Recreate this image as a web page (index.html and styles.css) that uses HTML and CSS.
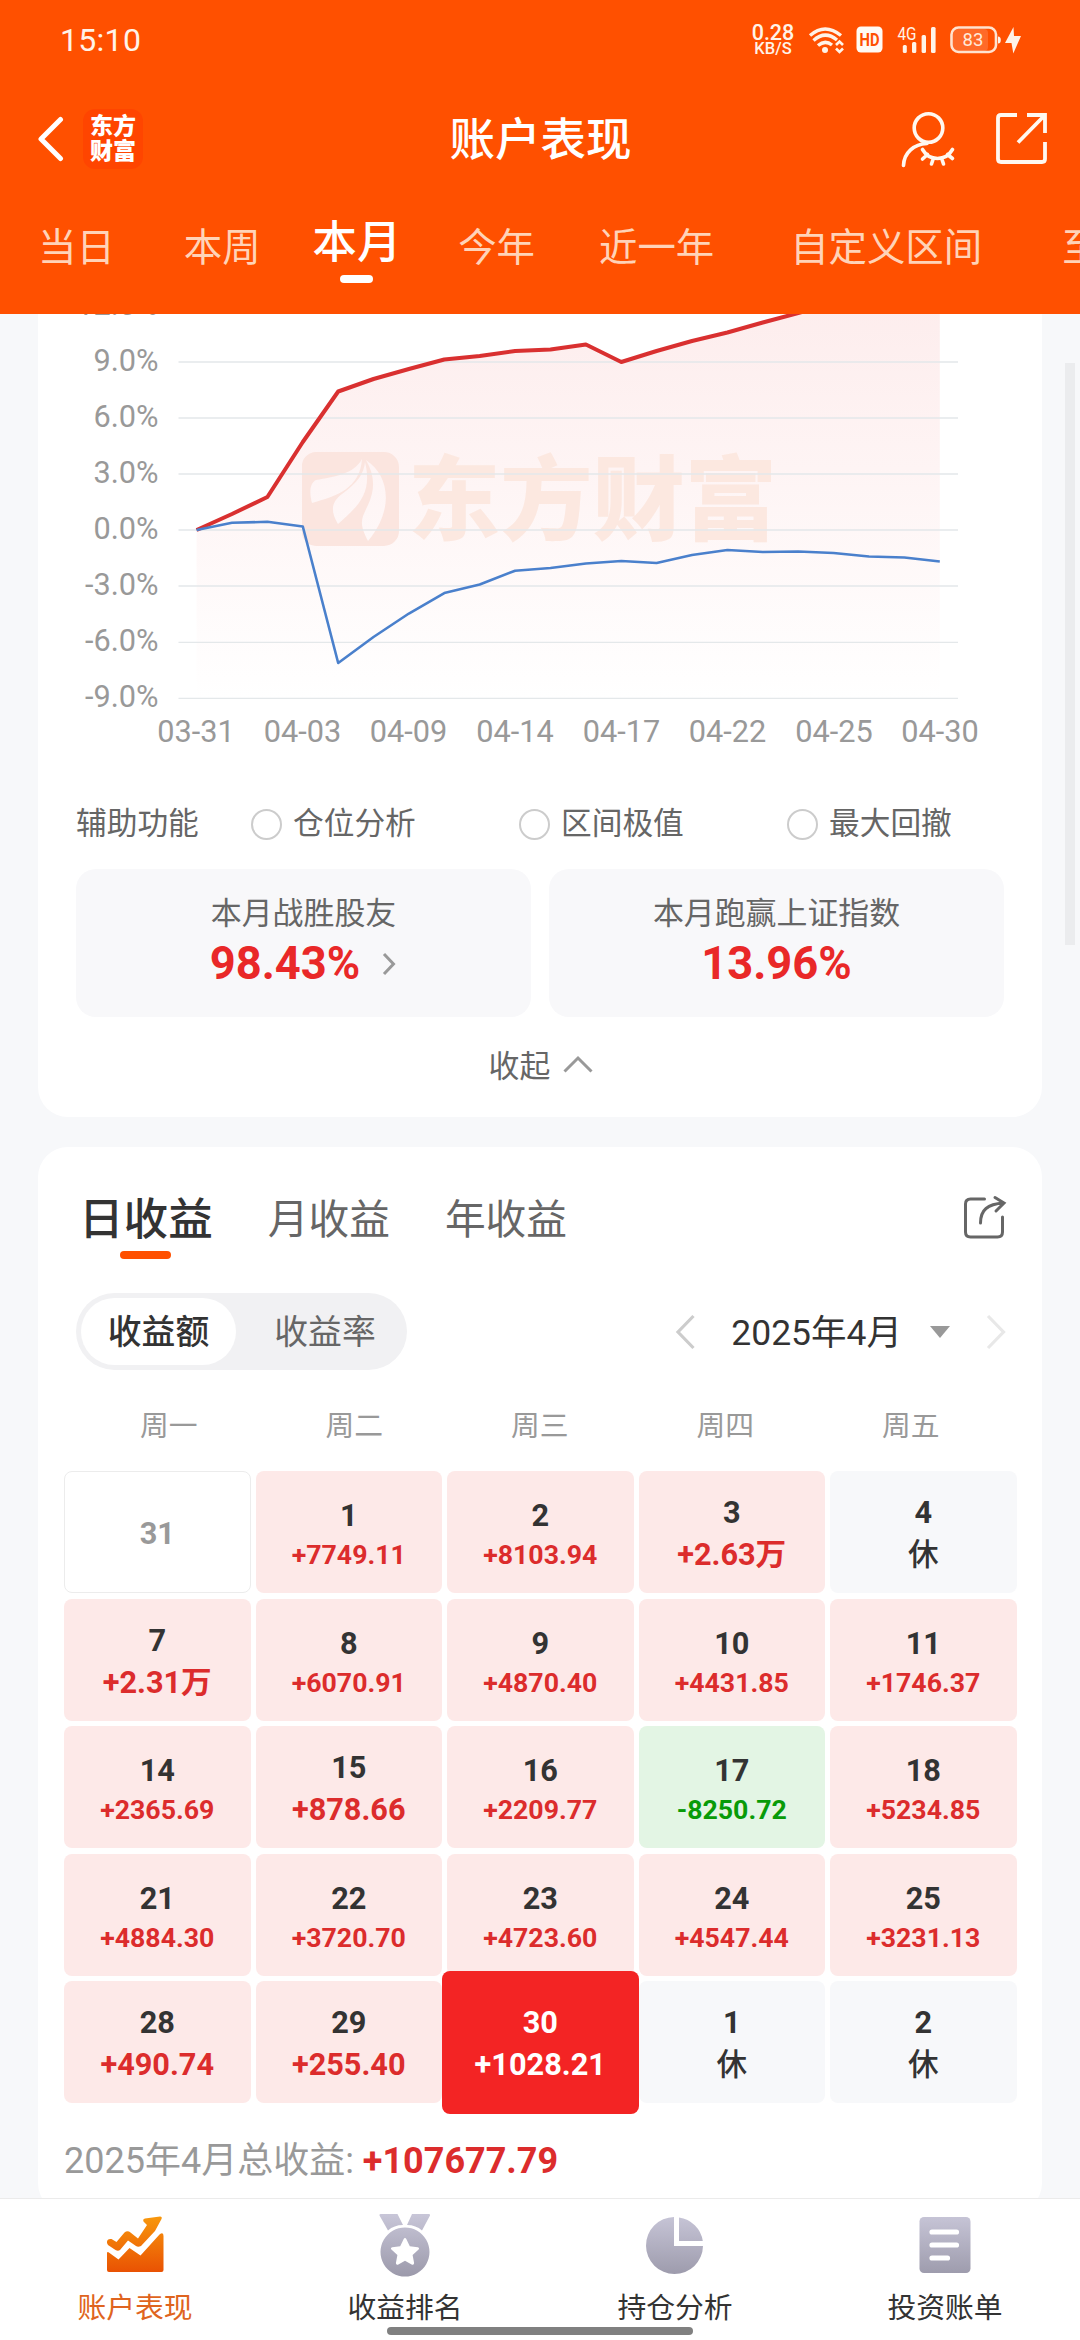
FILE: index.html
```html
<!DOCTYPE html>
<html lang="zh-CN">
<head>
<meta charset="utf-8">
<title>账户表现</title>
<link rel="stylesheet" href="styles.css">
</head>
<body>
<div class="app">
  <header class="header">
    <div class="status">
      <span class="clock">15:10</span>
      <div class="status-right">
        <div class="speed"><b>0.28</b><i>KB/S</i></div>
        <svg class="status-icons" width="216" height="34" viewBox="806 24 216 34">
          <g fill="none" stroke="#fff3e8" stroke-width="3.400">
            <path d="M810 36.500Q825 23.500 841 36.500"/>
            <path d="M813.500 41.500Q825 31 837 41"/>
            <path d="M818 46.500Q825 40.500 832 46"/>
          </g>
          <circle cx="825" cy="51" r="3" fill="#fff3e8"/>
          <path d="M836 46l3.500-3.500 3.500 3.500M836 49.500l3.500 3.500 3.500-3.500" fill="none" stroke="#fff3e8" stroke-width="2.600"/>
          <rect x="856.500" y="27.500" width="26" height="26" rx="4.500" fill="#fffaf4"/>
          <text x="859.500" y="47" class="hd" textLength="20" lengthAdjust="spacingAndGlyphs">HD</text>
          <text x="897.500" y="41" class="net" textLength="19" lengthAdjust="spacingAndGlyphs">4G</text>
          <g fill="#fff3e8">
            <rect x="902.800" y="46" width="4" height="8" rx="1.500"/>
            <rect x="912" y="43" width="4.300" height="11" rx="1.500"/>
            <rect x="921.600" y="36" width="4.400" height="18" rx="1.500"/>
            <rect x="931" y="28" width="4.600" height="26" rx="1.500"/>
            <path d="M1013.500 28l-8.500 16h6.500l1.800 10.500 7.700-17.500h-7z"/>
            <path d="M998 37.500q2.800 0 2.800 3.500t-2.800 3.500z"/>
          </g>
          <rect x="953" y="30" width="35" height="22" rx="4" fill="#ff6a28"/>
          <rect x="951.500" y="28.500" width="44.500" height="24.500" rx="7" fill="none" stroke="#ffe3d0" stroke-width="2.600"/>
          <text x="973" y="46.500" class="bat">83</text>
        </svg>
      </div>
    </div>
    <div class="titlebar">
      <div class="title-left">
        <svg width="28" height="48" viewBox="36 115 28 48"><path d="M60.500 119.500L41 139l19.500 19.500" fill="none" stroke="#fff" stroke-width="5" stroke-linecap="round" stroke-linejoin="round"/></svg>
        <div class="logo"><span>东方</span><span>财富</span></div>
      </div>
      <h1>账户表现</h1>
      <div class="title-right">
        <svg width="60" height="60" viewBox="898 108 60 60" fill="none" stroke="#fff8f0" stroke-width="3.600" stroke-linecap="round">
          <circle cx="928.500" cy="127" r="14.300"/>
          <path d="M927 142.500c-13 .5-23 9-23.500 22"/>
          <path d="M922.500 148.500c7 12 23 12 30 0M927.500 153.500l-5 4.500M947.500 153.500l5 4M933.500 157l-2 6M941.500 157l2 6"/>
        </svg>
        <svg width="56" height="56" viewBox="994 111 56 56" fill="none" stroke="#fff8f0" stroke-width="3.800">
          <path d="M1017 115h-16q-3 0-3 3v41q0 3 3 3h41q3 0 3-3v-17M1027 115h18v18M1045 115l-27 27.500"/>
        </svg>
      </div>
    </div>
    <nav class="tabs">
      <span class="t1">当日</span><span class="t2">本周</span><span class="t3 on">本月</span><span class="t4">今年</span><span class="t5">近一年</span><span class="t6">自定义区间</span><span class="t7">至今</span>
    </nav>
  </header>

  <main class="scroll">
    <section class="card card-chart">
      <svg class="chart" width="1004" height="446" viewBox="38 314 1004 446">
        <defs>
          <linearGradient id="area" gradientUnits="userSpaceOnUse" x1="0" y1="280" x2="0" y2="698">
            <stop offset="0" stop-color="#fdecec"/><stop offset=".45" stop-color="#fef4f4"/><stop offset="1" stop-color="#fff"/>
          </linearGradient>
        </defs>
        <path fill="url(#area)" d="M196.600 530L232 514 267.400 497 302.800 442 338.200 391.500 373.500 379 408.900 369 444.300 359.500 479.700 356 515.100 351 550.500 349.500 585.900 344.500 621.300 362 656.600 351 692 341 727.400 332.500 762.800 322.500 798.200 313 939.800 280V698H196.600Z"/>
        <g class="mark">
          <path fill-rule="evenodd" d="M316 452h68a15 15 0 0 1 15 15v64a15 15 0 0 1-15 15h-68a14 14 0 0 1-14-15v-64a14 14 0 0 1 14-15zM312 503C309 492 310 483 316 480C334 477 354 474 362 459C360 489 336 496 312 503zM338 524C329 509 333 501 342 494C357 483 364 474 365 462C373 494 357 507 338 524zM366 460C390 476 394 510 368 541C358 522 362 518 368 505C376 488 374 474 366 460z"/>
          <text x="408" y="533" textLength="369" lengthAdjust="spacingAndGlyphs">东方财富</text>
        </g>
        <path class="grid" d="M178.500 362H958M178.500 418H958M178.500 474H958M178.500 530H958M178.500 586H958M178.500 642.300H958M178.500 698.300H958"/>
        <polyline class="line-red" points="196.600,530 232,514 267.400,497 302.800,442 338.200,391.500 373.500,379 408.900,369 444.300,359.500 479.700,356 515.100,351 550.500,349.500 585.900,344.500 621.300,362 656.600,351 692,341 727.400,332.500 762.800,322.500 798.200,313 833,304"/>
        <polyline class="line-blue" points="196.600,530 232,522.800 267.400,521.800 302.800,526.500 338.200,663 373.500,637 408.900,613.500 444.300,593 479.700,584.500 515.100,570.700 550.500,568 585.900,563.500 621.300,561 656.600,563 692,555 727.400,550 762.800,552 798.200,551.500 833.600,553 869,556.500 904.400,557.500 939.800,561.500"/>
        <g class="ylab">
          <text x="158.500" y="315">12.0%</text><text x="158.500" y="371">9.0%</text><text x="158.500" y="427">6.0%</text><text x="158.500" y="483">3.0%</text><text x="158.500" y="539">0.0%</text><text x="158.500" y="595">-3.0%</text><text x="158.500" y="651">-6.0%</text><text x="158.500" y="707">-9.0%</text>
        </g>
        <g class="xlab">
          <text x="196" y="742">03-31</text><text x="302.500" y="742">04-03</text><text x="408.500" y="742">04-09</text><text x="515" y="742">04-14</text><text x="621.500" y="742">04-17</text><text x="727.500" y="742">04-22</text><text x="834" y="742">04-25</text><text x="940" y="742">04-30</text>
        </g>
      </svg>
      <div class="assist">
        <span>辅助功能</span>
        <label><i></i>仓位分析</label><label><i></i>区间极值</label><label><i></i>最大回撤</label>
      </div>
      <div class="stats">
        <div class="stat">
          <p>本月战胜股友</p>
          <strong>98.43%<svg width="16" height="26" viewBox="0 0 16 26"><path d="M3 3l9.500 10L3 23" fill="none" stroke="#999" stroke-width="3"/></svg></strong>
        </div>
        <div class="stat">
          <p>本月跑赢上证指数</p>
          <strong>13.96%</strong>
        </div>
      </div>
      <div class="fold">收起<svg width="30" height="18" viewBox="0 0 30 18"><path d="M1.500 16.500L15 3l13.500 13.500" fill="none" stroke="#999" stroke-width="3"/></svg></div>
    </section>

    <section class="card card-cal">
      <div class="cal-tabs">
        <span class="on">日收益</span><span>月收益</span><span>年收益</span>
        <svg width="44" height="46" viewBox="961 1194 44 46" fill="none" stroke="#666" stroke-width="3" stroke-linecap="round">
          <path d="M982.500 1199h-14q-5 0-5 5v28q0 5 5 5h27q5 0 5-5v-15"/>
          <path d="M978.500 1223c0-13 7-19 23-20M993 1197.500l9 5.500-8 8"/>
        </svg>
      </div>
      <div class="controls">
        <div class="seg"><span class="on">收益额</span><span>收益率</span></div>
        <div class="month">
          <svg width="22" height="36" viewBox="0 0 22 36"><path d="M19.500 2L4 18l15.500 16" fill="none" stroke="#ccc" stroke-width="3.200"/></svg>
          <span>2025年4月</span>
          <svg class="tri" width="20" height="12" viewBox="0 0 20 12"><path d="M0 0h20L10 12z" fill="#999"/></svg>
          <svg width="22" height="36" viewBox="0 0 22 36"><path d="M3 2l15.500 16L3 34" fill="none" stroke="#e8e8e8" stroke-width="3.200"/></svg>
        </div>
      </div>
      <div class="week"><span>周一</span><span>周二</span><span>周三</span><span>周四</span><span>周五</span></div>
      <div class="days">
        <div class="day out"><b>31</b></div>
        <div class="day up small"><b>1</b><em>+7749.11</em></div>
        <div class="day up small"><b>2</b><em>+8103.94</em></div>
        <div class="day up"><b>3</b><em>+2.63万</em></div>
        <div class="day rest"><b>4</b><em>休</em></div>
        <div class="day up"><b>7</b><em>+2.31万</em></div>
        <div class="day up small"><b>8</b><em>+6070.91</em></div>
        <div class="day up small"><b>9</b><em>+4870.40</em></div>
        <div class="day up small"><b>10</b><em>+4431.85</em></div>
        <div class="day up small"><b>11</b><em>+1746.37</em></div>
        <div class="day up small"><b>14</b><em>+2365.69</em></div>
        <div class="day up"><b>15</b><em>+878.66</em></div>
        <div class="day up small"><b>16</b><em>+2209.77</em></div>
        <div class="day down small"><b>17</b><em>-8250.72</em></div>
        <div class="day up small"><b>18</b><em>+5234.85</em></div>
        <div class="day up small"><b>21</b><em>+4884.30</em></div>
        <div class="day up small"><b>22</b><em>+3720.70</em></div>
        <div class="day up small"><b>23</b><em>+4723.60</em></div>
        <div class="day up small"><b>24</b><em>+4547.44</em></div>
        <div class="day up small"><b>25</b><em>+3231.13</em></div>
        <div class="day up"><b>28</b><em>+490.74</em></div>
        <div class="day up"><b>29</b><em>+255.40</em></div>
        <div class="day picked"><b>30</b><em>+1028.21</em></div>
        <div class="day rest"><b>1</b><em>休</em></div>
        <div class="day rest"><b>2</b><em>休</em></div>
      </div>
      <div class="total">2025年4月总收益: <b>+107677.79</b></div>
    </section>
    <div class="scrollbar"></div>
  </main>

  <footer class="tabbar">
    <svg class="defs" width="0" height="0">
      <linearGradient id="gry" gradientUnits="userSpaceOnUse" x1="0" y1="2214" x2="0" y2="2276"><stop offset="0" stop-color="#c8c6d8"/><stop offset="1" stop-color="#9c9aab"/></linearGradient>
      <linearGradient id="org" gradientUnits="userSpaceOnUse" x1="0" y1="2216" x2="0" y2="2272"><stop offset="0" stop-color="#f8980c"/><stop offset="1" stop-color="#e95203"/></linearGradient>
    </svg>
    <div class="tab on">
      <svg width="64" height="68" viewBox="103 2211 64 68" fill="url(#org)">
        <path d="M108.500 2252.300L118.500 2259.500 129.500 2248 140.500 2255.500 159.500 2234.500Q163.500 2231.500 163.500 2236V2270Q163.500 2272 161.500 2272H109Q107 2272 107 2270V2253.500Q107 2251.500 108.500 2252.300Z"/>
        <path d="M107 2243Q106.500 2238.500 111.500 2239L116.500 2242 124.500 2232.500Q127.500 2230 130.500 2232.500L138 2238.500 147 2225 143.500 2221.500Q142.500 2219 145 2218.500L160 2216.500Q162.500 2216.500 161.500 2219L155 2231 141 2246Q138 2247.500 136 2246L128 2240.500 120 2250Q118 2251.500 115.500 2250L108 2245Z"/>
      </svg>
      <span>账户表现</span>
    </div>
    <div class="tab">
      <svg width="64" height="68" viewBox="374 2211 64 68" fill="url(#gry)">
        <path d="M381.500 2214h17l5.500 11q-9 0-15 5.500l-8.500-15q-.5-1.500 1-1.500zM413 2214h17q1.500 0 1 1.500l-8 15q-6-5.500-15-5.500z"/>
        <path fill-rule="evenodd" d="M406 2227.500a24.500 24.500 0 1 1-.01 0zM406 2238q-.8 0-1.300 1l-3.500 7.300-8 1q-2 .6-.8 2.200l6 5.600-1.500 8q0 2 2 1.600l7.100-3.900 7.100 3.900q2 .4 2-1.600l-1.500-8 6-5.600q1.200-1.600-.8-2.200l-8-1-3.500-7.300q-.5-1-1.300-1z"/>
      </svg>
      <span>收益排名</span>
    </div>
    <div class="tab">
      <svg width="64" height="68" viewBox="643 2211 64 68" fill="url(#gry)">
        <path d="M674 2217a28.500 28.500 0 1 0 29 29h-29zM679 2217.500v23.500h23.800a28 28 0 0 0-23.800-23.500z"/>
      </svg>
      <span>持仓分析</span>
    </div>
    <div class="tab">
      <svg width="64" height="68" viewBox="913 2211 64 68">
        <rect x="919.500" y="2217" width="51" height="56" rx="4.500" fill="url(#gry)"/>
        <path d="M932 2232h24.500M932 2245h24.500M932 2258h15.500" stroke="#fff" stroke-width="5.200" stroke-linecap="round"/>
      </svg>
      <span>投资账单</span>
    </div>
    <div class="home"></div>
  </footer>
</div>
</body>
</html>
```
FILE: styles.css
```css
* { box-sizing: border-box; margin: 0; padding: 0; }
body {
  width: 1080px; height: 2340px; overflow: hidden;
  font-family: Roboto, "Noto Sans CJK SC", sans-serif;
  color: #333; background: #f7f8fa;
}
svg { display: block; flex: none; }
em, i { font-style: normal; }
.app { width: 1080px; height: 2340px; display: flex; flex-direction: column; }

.header { height: 314px; flex: none; background: #ff5000; color: #fff; overflow: hidden; }
.status { height: 80px; padding: 0 58px 0 60px; display: flex; justify-content: space-between; align-items: center; }
.clock { font-size: 32px; line-height: 40px; color: #fff3e8; letter-spacing: .3px; }
.status-right { display: flex; align-items: center; gap: 11px; }
.speed { width: 44px; text-align: center; color: #fff3e8; padding-top: 1px; }
.speed b, .speed i { display: block; font-weight: 500; }
.speed b { font-size: 21.500px; line-height: 16px; }
.speed i { font-size: 16.500px; line-height: 15px; }
.hd { font: 700 19px Roboto, sans-serif; fill: #ff5000; }
.net { font: 400 18px Roboto, sans-serif; fill: #fff3e8; }
.bat { font: 400 18.500px Roboto, sans-serif; fill: #ffe9da; text-anchor: middle; }

.titlebar { height: 118px; padding: 0 30px 0 36px; display: grid; grid-template-columns: 1fr auto 1fr; align-items: center; }
.title-left { display: flex; align-items: center; gap: 19px; }
.logo {
  width: 60px; height: 60px; border-radius: 12px; background: #ff4500; padding-top: 5px;
  font-size: 23px; line-height: 25px; font-weight: 900; text-align: center;
}
.logo span { display: block; }
h1 { font-size: 45.500px; line-height: 60px; font-weight: 500; padding-top: 4px; margin-left: -5px; }
.title-right { display: flex; justify-content: flex-end; align-items: center; gap: 36px; }

.tabs { height: 116px; padding: 20px 0 0 38px; display: flex; white-space: nowrap; font-size: 38.400px; line-height: 60px; color: #ffd3b8; }
.tabs .t2 { margin-left: 69px; }
.tabs .t3 { margin-left: 52px; }
.tabs .t4 { margin-left: 57px; }
.tabs .t5 { margin-left: 64px; }
.tabs .t6 { margin-left: 76px; }
.tabs .t7 { margin-left: 80px; }
.tabs .on { font-size: 44.300px; line-height: 50px; font-weight: 500; color: #fff; display: flex; flex-direction: column; align-items: center; }
.tabs .on::after { content: ""; width: 33px; height: 8px; border-radius: 4px; background: #fff; margin-top: 7px; }

.scroll { position: relative; height: 1884px; flex: none; overflow: hidden; padding: 0 38px; background: #f7f8fa; }
.scrollbar { position: absolute; left: 1065px; top: 49px; width: 10px; height: 582px; background: #ebecee; }
.card { background: #fff; }
.card-chart { height: 803px; border-radius: 0 0 30px 30px; }
.chart text { font-family: Roboto, sans-serif; font-size: 30.700px; fill: #999; }
.ylab { text-anchor: end; }
.xlab { text-anchor: middle; }
.grid { stroke: #e4e8ea; stroke-width: 1.300; fill: none; }
.line-red { fill: none; stroke: #d93030; stroke-width: 4; stroke-linejoin: round; }
.line-blue { fill: none; stroke: #4a80cc; stroke-width: 2.600; stroke-linejoin: round; }
.mark { fill: #fbe5df; }
.chart .mark text { font-family: "Noto Sans CJK SC", sans-serif; font-weight: 900; font-size: 92px; fill: #fce8e0; }

.assist { height: 109px; padding: 19px 38px 0; display: flex; align-items: center; font-size: 30.700px; line-height: 40px; color: #666; }
.assist > span { width: 175px; flex: none; }
.assist label { width: 268px; flex: none; display: flex; align-items: center; gap: 11px; }
.assist i { width: 31px; height: 31px; border: 2px solid #ccc; border-radius: 50%; }
.stats { padding: 0 38px; display: grid; grid-template-columns: 1fr 1fr; gap: 18px; height: 148px; }
.stat { background: #f8f8fa; border-radius: 20px; padding-top: 25px; text-align: center; }
.stat p { font-size: 30.900px; line-height: 40px; color: #666; }
.stat strong { display: flex; justify-content: center; align-items: center; gap: 21px; font-size: 45.300px; line-height: 60px; font-weight: 700; color: #e92828; }
.fold { display: flex; justify-content: center; align-items: center; gap: 13px; font-size: 30.900px; line-height: 40px; color: #666; margin: 30px 0 0 2px; }
.fold svg { margin-bottom: 6px; }

.card-cal { height: 1066px; margin-top: 30px; border-radius: 30px; padding: 0 26px; }
.cal-tabs { height: 146px; padding: 43px 9px 0 15px; display: flex; align-items: flex-start; font-size: 40.700px; line-height: 60px; color: #666; }
.cal-tabs span + span { margin-left: 55px; }
.cal-tabs .on { font-size: 44.600px; font-weight: 500; color: #333; display: flex; flex-direction: column; align-items: center; }
.cal-tabs .on::after { content: ""; width: 51px; height: 8px; border-radius: 4px; background: #ff5000; margin-top: 1px; }
.cal-tabs svg { margin: 4px 0 0 auto; }
.controls { height: 77px; padding: 0 9px 0 12px; display: flex; justify-content: space-between; align-items: center; }
.seg { width: 331px; height: 77px; padding: 5px; border-radius: 39px; background: #f1f1f3; display: flex; font-size: 33.800px; line-height: 69px; text-align: center; color: #666; }
.seg span { width: 155px; height: 67px; flex: none; border-radius: 34px; }
.seg .on { background: #fff; color: #333; font-weight: 500; }
.seg span + span { width: 178px; }
.month { display: flex; align-items: center; font-size: 35.500px; line-height: 50px; }
.month span { margin: 3px 28px 0 35px; }
.month .tri { margin-right: 35px; }
.week { height: 101px; padding: 8px 0 0 12px; display: grid; grid-template-columns: repeat(5, 185.500px); font-size: 28.800px; line-height: 96px; color: #999; text-align: center; }
.days { display: grid; grid-template-columns: repeat(5, 186.500px); grid-auto-rows: 122px; gap: 5.500px 5px; }
.day { border-radius: 8px; text-align: center; padding-top: 21px; color: #333; }
.day b, .day em { display: block; font-size: 30.700px; line-height: 42px; font-weight: 700; }
.small { padding-top: 24px; }
.day.small em { font-size: 26.700px; line-height: 37px; }
.up { background: #fde9e8; }
.up em { color: #dc2c2c; }
.down { background: #e3f5e4; }
.down em { color: #089b08; }
.day.rest em { font-weight: 500; }
.rest { background: #f7f8fa; }
.out { border: 1px solid #ececec; padding-top: 41px; }
.out b { color: #999; }
.picked { background: #f32424; color: #fff; margin: -10px -5px -11px; padding-top: 31px; z-index: 1; border-radius: 8px; }
.total { margin-top: 32px; font-size: 36px; line-height: 52px; color: #999; white-space: nowrap; }
.total b { font-weight: 700; color: #dc2c2c; }

.tabbar { position: relative; height: 142px; flex: none; border-top: 1px solid #ebebeb; background: #fff; display: grid; grid-template-columns: repeat(4, 270px); }
.defs { position: absolute; }
.tab { display: flex; flex-direction: column; align-items: center; padding-top: 12px; font-size: 28.800px; line-height: 40px; color: #333; }
.tab span { margin-top: 9px; }
.tab.on { color: #df6420; }
.home { position: absolute; left: 387px; top: 128px; width: 306px; height: 8px; border-radius: 4px; background: #808080; }
```
